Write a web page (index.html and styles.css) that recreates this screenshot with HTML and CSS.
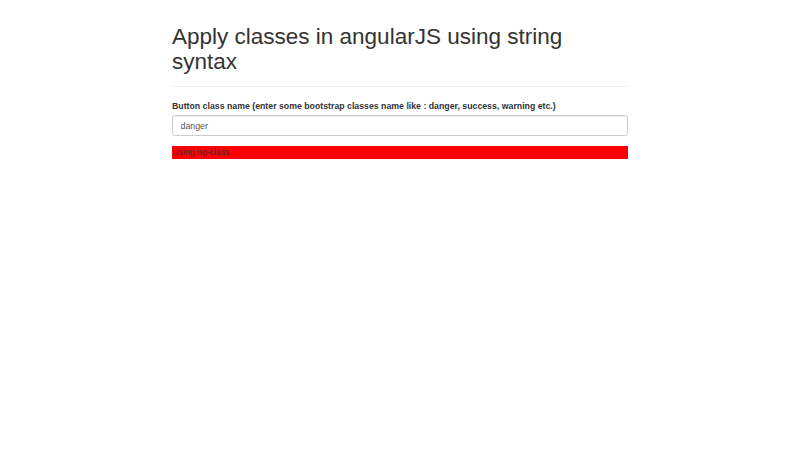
FILE: index.html
```html
<!DOCTYPE html>
<html>
<head>
<meta charset="utf-8">
<title>Apply classes in angularJS using string syntax</title>
<link rel="stylesheet" href="styles.css">
</head>
<body>
<div class="container">
  <div class="page-header">
    <h1>Apply classes in angularJS using string syntax</h1>
  </div>
  <div class="form-group">
    <label class="label">Button class name (enter some bootstrap classes name like : danger, success, warning etc.)</label>
    <input class="form-control" type="text" value="danger">
  </div>
  <div class="danger">Using ng-class</div>
</div>
</body>
</html>
```

FILE: styles.css
```css
* { box-sizing: border-box; }
html, body { margin: 0; padding: 0; background: #fff; }
body {
  font-family: "Liberation Sans", Arial, Helvetica, sans-serif;
  font-size: 8.75px;
  line-height: 12.66px;
  color: #333;
}
.container {
  width: 456px;
  margin: 0 auto;
  padding-top: 11.7px;
}
.page-header {
  margin: 0 0 12.7px;
  padding-bottom: 6.7px;
  border-bottom: 1px solid #eee;
}
.page-header h1 {
  margin: 12.7px 0 5.3px;
  font-size: 22.5px;
  line-height: 25px;
  font-weight: 500;
  color: #333;
}
.form-group { margin-bottom: 9.5px; }
.label {
  display: inline-block;
  font-weight: bold;
  margin-bottom: 2.2px;
}
.form-control {
  display: block;
  width: 100%;
  height: 21.5px;
  padding: 3.8px 7.6px;
  font-family: inherit;
  font-size: 8.75px;
  line-height: 12.66px;
  color: #555;
  background: #fff;
  border: 1px solid #ccc;
  border-radius: 2.5px;
  box-shadow: inset 0 1px 1px rgba(0,0,0,.075);
  outline: none;
}
.danger {
  background: #f00;
  color: #333;
}
```
